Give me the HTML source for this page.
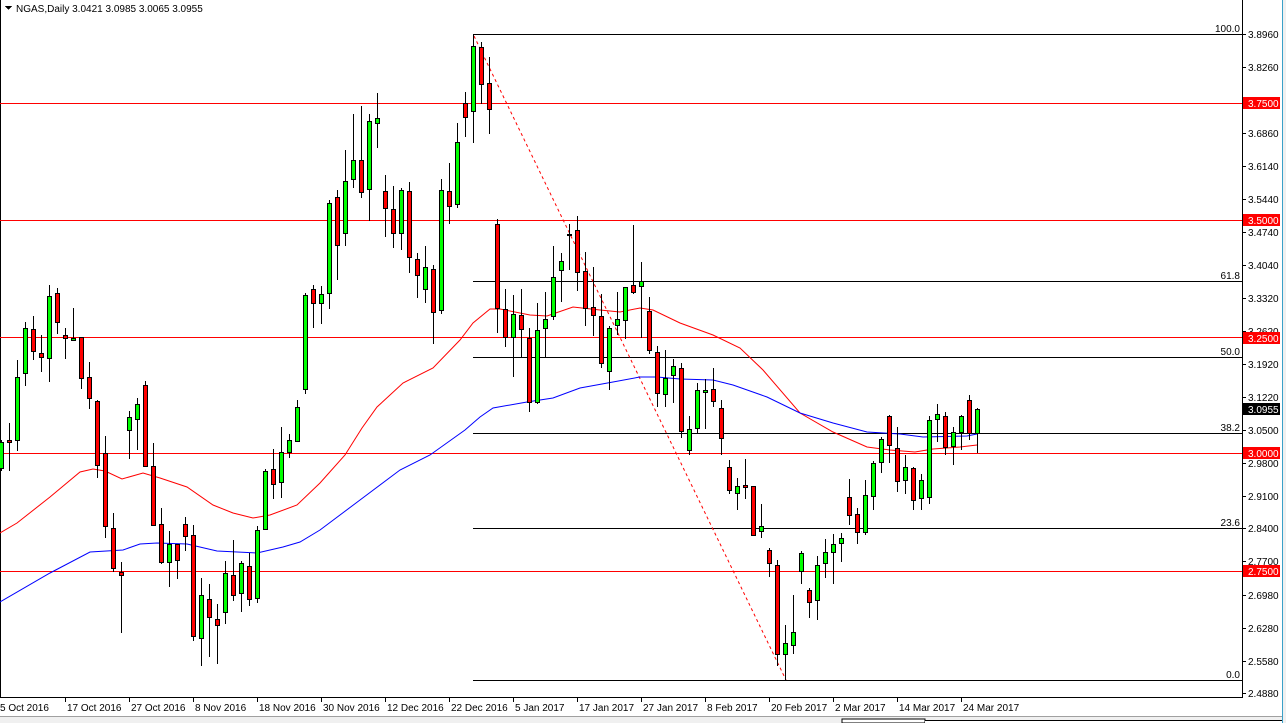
<!DOCTYPE html>
<html><head><meta charset="utf-8"><style>
html,body{margin:0;padding:0;background:#fff;width:1286px;height:723px;overflow:hidden}
svg{display:block}
text{font-family:"Liberation Sans",Tahoma,sans-serif;font-size:10px;fill:#000}
</style></head><body>
<svg id="s" width="1286" height="723" xmlns="http://www.w3.org/2000/svg" shape-rendering="crispEdges">
<rect x="0" y="0" width="1286" height="723" fill="#fff"/>
<rect x="0" y="716" width="1283" height="7" fill="#f0f0f0"/>
<line x1="0" y1="716.5" x2="1283" y2="716.5" stroke="#a0a0a0"/>
<rect x="842" y="719" width="83" height="4" fill="#fff" stroke="#000"/>
<rect x="925" y="720" width="358" height="3" fill="#fff"/>
<line x1="925" y1="720.5" x2="1283" y2="720.5" stroke="#000"/>
<rect x="1282" y="0" width="4" height="723" fill="#f0f0f0"/>
<line x1="1282.5" y1="0" x2="1282.5" y2="723" stroke="#3aa0c8"/>
<line x1="0.5" y1="0" x2="0.5" y2="697" stroke="#000"/>
<line x1="0" y1="697.5" x2="1243" y2="697.5" stroke="#000"/>
<line x1="1242.5" y1="0" x2="1242.5" y2="698" stroke="#000"/>
<g stroke="#ff0000">
<line x1="0" y1="103.5" x2="1242" y2="103.5"/>
<line x1="0" y1="220.5" x2="1242" y2="220.5"/>
<line x1="0" y1="337.5" x2="1242" y2="337.5"/>
<line x1="0" y1="453.5" x2="1242" y2="453.5"/>
<line x1="0" y1="571.5" x2="1242" y2="571.5"/>
</g>
<g stroke="#000">
<line x1="473" y1="34.5" x2="1242" y2="34.5"/>
<line x1="473.5" y1="34" x2="473.5" y2="42"/>
<line x1="473" y1="281.5" x2="1242" y2="281.5"/>
<line x1="473" y1="357.5" x2="1242" y2="357.5"/>
<line x1="473" y1="433.5" x2="1242" y2="433.5"/>
<line x1="473" y1="528.5" x2="1242" y2="528.5"/>
<line x1="473" y1="680.5" x2="1242" y2="680.5"/>
</g>
<line x1="474" y1="36" x2="786" y2="680" stroke="#ff0000" stroke-dasharray="3,3" shape-rendering="auto"/>
<g text-anchor="end">
<text x="1240" y="32">100.0</text>
<text x="1240" y="279">61.8</text>
<text x="1240" y="355">50.0</text>
<text x="1240" y="431">38.2</text>
<text x="1240" y="526">23.6</text>
<text x="1240" y="678">0.0</text>
</g>
<polyline fill="none" stroke="#ff0000" shape-rendering="auto" points="0,533 17,523 50,497 80,472 93,469 105,471 122,479 143,473 160,478 187,487 213,505 233,513 253,518 270,515 297,505 320,483 345,455 362,428 377,407 403,383 433,368 460,340 473,323 490,309 500,309 530,315 547,316 573,307 600,310 620,312 640,308 653,310 680,323 713,335 740,348 763,370 800,413 833,432 867,447 890,450 915,452 933,449 960,447 977,445"/>
<polyline fill="none" stroke="#0000ff" shape-rendering="auto" points="0,602 50,573 90,552 123,550 140,544 157,543 187,544 217,551 257,553 283,547 300,542 320,530 360,500 400,470 430,455 465,430 480,417 493,408 527,402 553,398 580,388 613,382 640,377 657,377 680,379 713,380 733,385 767,397 800,413 833,423 867,432 900,434 923,437 967,436 977,434"/>
<g id="c"></g>
<g id="ax"></g>
<path d="M5 6 L12 6 L8.5 10 Z" fill="#000"/>
<text x="16" y="12">NGAS,Daily  3.0421 3.0985 3.0065 3.0955</text>
<g id="dt"></g>
</svg>
<script>
var NS="http://www.w3.org/2000/svg";
function el(p,t,a,tx){var e=document.createElementNS(NS,t);for(var k in a)e.setAttribute(k,a[k]);if(tx)e.textContent=tx;p.appendChild(e);return e;}
var D=[[1,440,442,468,470,1],[9,423,440,442,470,0],[17,360,377,440,450,1],[25,322,328,373,385,1],[33,316,329,351,359,0],[41,335,353,357,371,0],[49,285,296,358,381,1],[57,288,293,322,333,0],[65,328,335,338,358,0],[73,308,338,340,340,1],[81,337,337,378,388,0],[89,362,377,398,408,0],[97,400,401,465,477,0],[105,436,453,526,537,0],[113,513,528,568,571,0],[121,562,572,575,632,0],[129,411,417,430,458,1],[137,398,404,419,449,1],[145,381,385,466,466,0],[153,443,466,525,525,0],[161,508,524,562,563,0],[169,531,544,562,586,1],[177,544,544,560,578,0],[185,517,524,536,550,0],[193,525,535,636,640,0],[201,578,595,638,665,1],[209,584,599,617,656,0],[217,604,619,625,663,0],[225,561,573,612,623,1],[233,540,575,595,600,0],[241,561,563,593,611,1],[249,553,566,599,605,0],[257,526,530,598,602,1],[265,469,471,529,529,1],[273,449,469,484,498,0],[281,427,452,482,497,1],[289,434,440,452,457,1],[297,400,407,441,441,1],[305,293,295,389,393,1],[313,285,289,303,327,0],[321,286,294,303,323,1],[329,200,203,293,308,1],[337,190,197,245,279,0],[345,150,181,233,245,1],[353,114,160,179,187,1],[361,106,160,192,197,0],[369,114,121,189,220,1],[377,93,118,123,147,1],[385,175,191,208,236,0],[393,186,209,233,247,0],[401,188,190,233,249,1],[409,182,191,257,272,0],[417,253,259,275,297,0],[425,246,267,289,302,1],[433,265,269,312,343,0],[441,179,190,310,313,1],[449,163,191,206,223,0],[457,123,142,204,207,1],[465,92,103,117,136,0],[473,35,46,111,142,1],[481,42,47,84,103,0],[489,57,83,109,133,0],[497,219,224,308,332,0],[505,289,309,337,346,0],[513,295,314,337,376,1],[521,289,315,329,357,0],[529,328,338,402,411,0],[537,303,330,402,403,1],[545,292,319,328,356,1],[553,246,277,316,319,1],[561,253,261,270,301,1],[569,224,234,234,269,0],[577,216,230,272,290,0],[585,252,271,308,325,0],[593,267,307,315,335,0],[601,294,316,363,367,0],[609,326,328,371,389,1],[617,292,319,325,334,1],[625,287,287,320,338,1],[633,225,285,292,293,0],[641,262,281,286,337,1],[649,297,311,350,353,0],[657,346,352,393,406,0],[665,350,378,394,406,1],[673,359,366,375,402,1],[681,363,368,431,437,0],[689,416,429,450,454,1],[697,383,390,428,433,1],[705,379,390,392,428,1],[713,368,389,401,406,0],[721,400,408,438,454,0],[729,460,467,490,493,0],[737,478,486,493,509,1],[745,459,485,487,498,0],[753,486,486,535,535,0],[761,504,526,531,537,1],[769,548,550,563,576,0],[777,560,565,654,665,0],[785,625,643,654,680,1],[793,595,632,645,653,1],[801,551,553,571,583,1],[809,588,590,602,617,0],[817,556,565,600,619,1],[825,539,552,563,577,1],[833,534,544,552,583,1],[841,533,538,543,561,1],[849,479,497,515,524,0],[857,508,514,532,543,0],[865,480,495,532,534,1],[873,461,463,496,509,1],[881,437,439,462,472,1],[889,415,416,445,462,0],[897,427,448,481,491,0],[905,455,467,480,493,1],[913,467,468,500,509,0],[921,474,480,498,509,1],[929,416,420,497,503,1],[937,404,414,419,441,1],[945,412,416,447,454,0],[953,427,432,446,464,1],[961,415,416,432,449,1],[969,395,400,433,439,0],[977,408,409,433,452,1]];
var g=document.getElementById('c');
D.forEach(function(d){var x=d[0];
el(g,'line',{x1:x+.5,y1:d[1],x2:x+.5,y2:d[4]+1,stroke:'#000'});
var h=Math.max(d[3]-d[2],1);
el(g,'rect',{x:x-1.5,y:d[2]+.5,width:4,height:h,fill:d[5]?'#00ff00':'#ff0000',stroke:'#000'});
});
var ax=document.getElementById('ax');
var L=[[34,"3.8960"],[67,"3.8260"],[133,"3.6860"],[166,"3.6140"],[199,"3.5440"],[232,"3.4740"],[265,"3.4040"],[298,"3.3320"],[331,"3.2620"],[364,"3.1920"],[397,"3.1220"],[430,"3.0500"],[463,"2.9800"],[496,"2.9100"],[528,"2.8400"],[561,"2.7700"],[595,"2.6980"],[628,"2.6280"],[661,"2.5580"],[693,"2.4880"]];
L.forEach(function(l){el(ax,'line',{x1:1243,y1:l[0]+.5,x2:1246,y2:l[0]+.5,stroke:'#000'});el(ax,'text',{x:1248,y:l[0]+4},l[1]);});
[[103,"3.7500"],[220,"3.5000"],[338,"3.2500"],[453,"3.0000"],[571,"2.7500"]].forEach(function(l){el(ax,'rect',{x:1243,y:l[0]-6,width:37,height:12,fill:'#ff0000'});el(ax,'text',{x:1248,y:l[0]+4,style:'fill:#fff'},l[1]);});
el(ax,'rect',{x:1243,y:403,width:37,height:12,fill:'#000'});el(ax,'text',{x:1248,y:413,style:'fill:#fff'},"3.0955");
var dt=document.getElementById('dt');
var T=[[-2,"5 Oct 2016"],[65,"17 Oct 2016"],[129,"27 Oct 2016"],[193,"8 Nov 2016"],[257,"18 Nov 2016"],[321,"30 Nov 2016"],[385,"12 Dec 2016"],[449,"22 Dec 2016"],[513,"5 Jan 2017"],[577,"17 Jan 2017"],[641,"27 Jan 2017"],[705,"8 Feb 2017"],[769,"20 Feb 2017"],[833,"2 Mar 2017"],[897,"14 Mar 2017"],[961,"24 Mar 2017"]];
T.forEach(function(t){if(t[0]>0)el(dt,'line',{x1:t[0]+.5,y1:698,x2:t[0]+.5,y2:702,stroke:'#000'});el(dt,'text',{x:t[0]+2,y:711},t[1]);});
</script>
</body></html>
